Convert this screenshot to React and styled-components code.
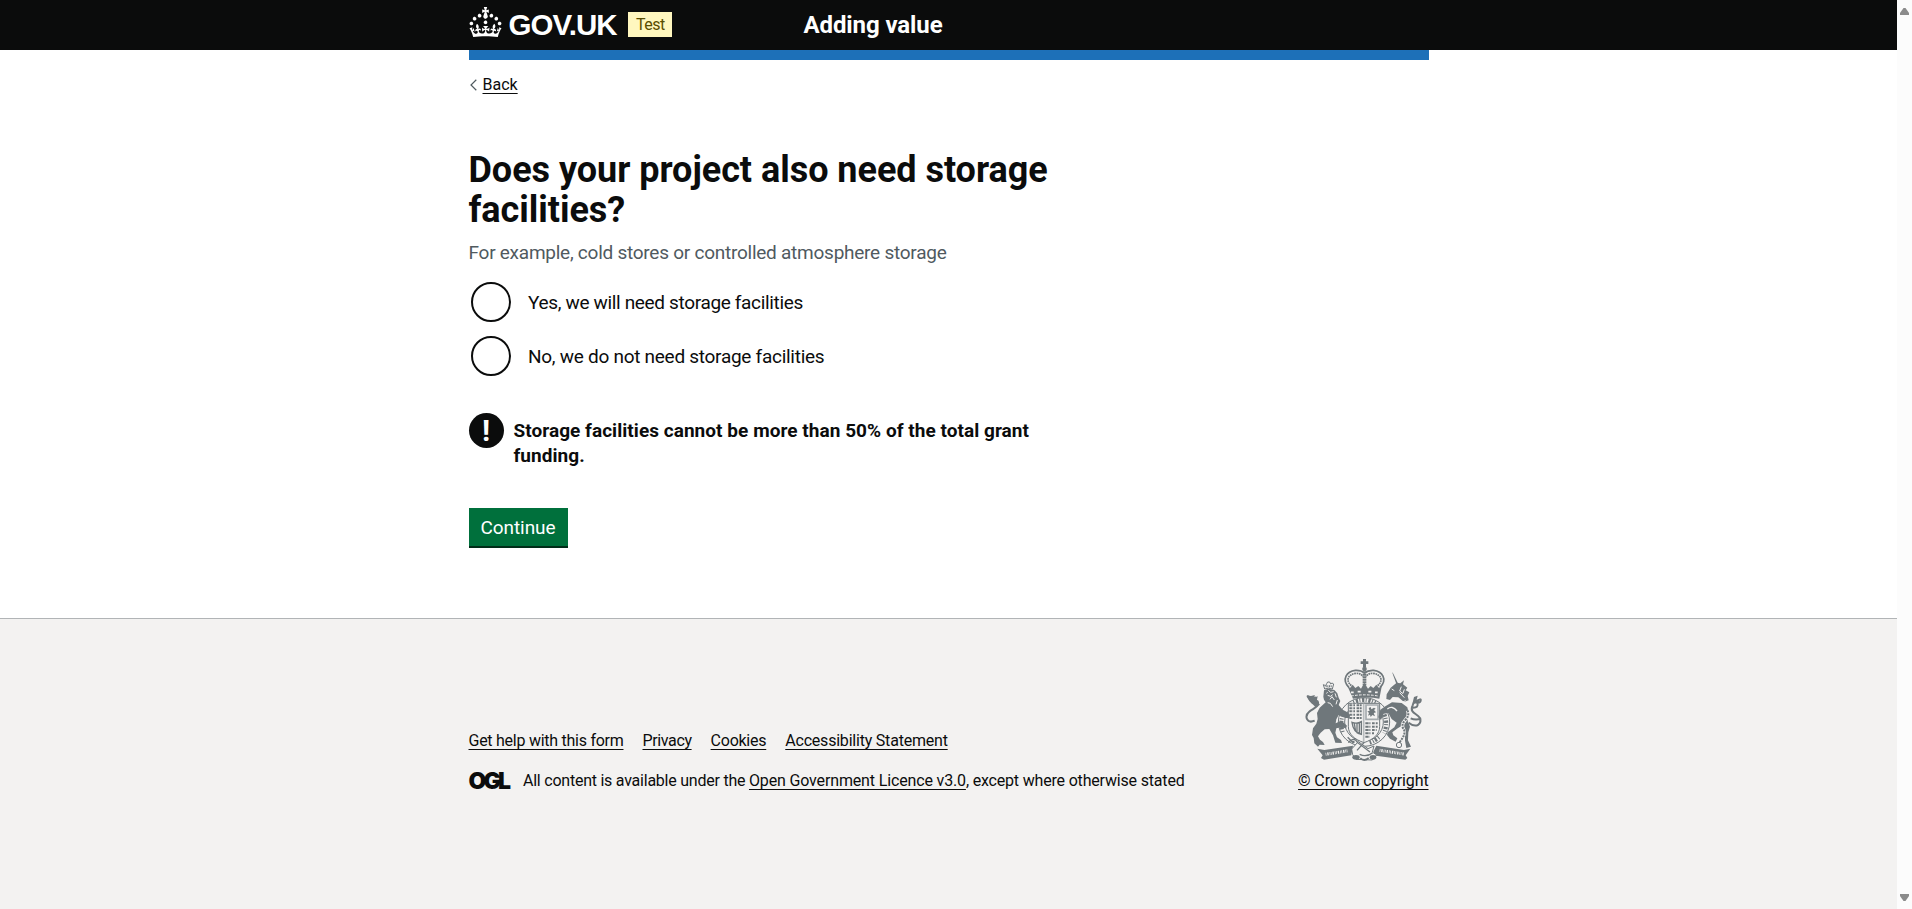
import React from "react";
import styled, { createGlobalStyle } from "styled-components";

const GlobalStyle = createGlobalStyle`
  *, *::before, *::after { box-sizing: border-box; }
  html, body { margin: 0; padding: 0; height: 100%; overflow: hidden; background: #fff; }
  body { font-family: Roboto, "Liberation Sans", Arial, sans-serif; color: #0b0c0c; }
  #root { height: 100%; }
`;

const Window = styled.div`
  display: flex;
  height: 909px;
`;
const Page = styled.div`
  display: flex;
  flex-direction: column;
  flex: 1;
  min-width: 0;
`;
const Scrollbar = styled.div`
  display: flex;
  flex-direction: column;
  justify-content: space-between;
  align-items: center;
  width: 15px;
  padding: 8px 0;
  background: #fcfcfc;
`;
const Arrow = styled.svg`
  display: block;
  width: 9px;
  height: 7px;
  fill: #8b8b8b;
  transform: ${(p) => (p.$down ? "rotate(180deg)" : "none")};
`;
const Container = styled.div`
  width: 960px;
  margin: 0 auto;
`;

const Header = styled.header`
  height: 50px;
  background: #0b0c0c;
  color: #fff;
`;
const HeaderRow = styled(Container)`
  display: flex;
  align-items: center;
  height: 50px;
`;
const Brand = styled.div`
  display: flex;
  align-items: center;
  width: 335px;
`;
const Crown = styled.svg`
  display: block;
  width: 33px;
  height: 30px;
  margin-top: -6px;
  fill: #fff;
`;
const Wordmark = styled.span`
  width: 119.5px;
  margin-left: 7px;
  font: 700 29.5px/30px "Liberation Sans", Arial, sans-serif;
  letter-spacing: -0.9px;
  white-space: nowrap;
`;
const PhaseTag = styled.strong`
  width: 44px;
  height: 25px;
  margin-top: -1px;
  padding-left: 8px;
  background: #fff7bf;
  color: #594d00;
  font-size: 16px;
  font-weight: 400;
  line-height: 25px;
  letter-spacing: -0.5px;
`;
const ServiceName = styled.span`
  font-size: 24px;
  font-weight: 700;
  line-height: 30px;
  letter-spacing: -0.1px;
`;
const BlueBar = styled(Container)`
  height: 10px;
  background: #1d70b8;
`;

const Link = styled.a`
  color: #0b0c0c;
  text-decoration: underline;
  text-decoration-thickness: 1px;
  text-underline-offset: 2.6px;
  text-decoration-skip-ink: none;
  letter-spacing: ${(p) => p.$track || 0}px;
  white-space: nowrap;
`;
const BackRow = styled.div`
  display: flex;
  align-items: center;
  gap: 5.5px;
  height: 20px;
  margin-top: 15px;
  padding-left: 1.5px;
  font-size: 16px;
  line-height: 20px;
`;
const Chevron = styled.svg`
  display: block;
  width: 7px;
  height: 12px;
  fill: none;
  stroke: #505a5f;
  stroke-width: 1.2;
`;

const Main = styled.main`
  width: 630px;
  padding-top: 55px;
`;
const Heading = styled.h1`
  margin: 0;
  font-size: 36px;
  font-weight: 700;
  line-height: 40px;
  letter-spacing: -0.03px;
`;
const Hint = styled.p`
  margin: 10px 0 0;
  color: #505a5f;
  font-size: 19px;
  line-height: 25px;
  letter-spacing: -0.25px;
`;
const Radios = styled.div`
  display: flex;
  flex-direction: column;
  gap: 14px;
  margin-top: 17px;
`;
const Option = styled.label`
  display: flex;
  align-items: center;
  gap: 17.5px;
  height: 40px;
  padding-left: 2px;
  font-size: 19px;
  line-height: 25px;
  letter-spacing: ${(p) => p.$track}px;
`;
const Circle = styled.span`
  width: 40px;
  height: 40px;
  border: 2px solid #0b0c0c;
  border-radius: 50%;
`;
const Warning = styled.div`
  display: flex;
  align-items: flex-start;
  gap: 10px;
  margin-top: 37px;
`;
const WarningIcon = styled.span`
  flex: none;
  width: 35px;
  height: 35px;
  border-radius: 50%;
  background: #0b0c0c;
  color: #fff;
  font-size: 30px;
  font-weight: 700;
  line-height: 35px;
  text-align: center;
`;
const WarningText = styled.strong`
  width: 545px;
  padding-top: 5px;
  font-size: 19px;
  font-weight: 700;
  line-height: 25px;
  letter-spacing: 0.045px;
`;
const Button = styled.button`
  display: block;
  width: 99px;
  height: 38px;
  margin: 40px 0 0;
  padding: 1px 0 0;
  border: 0;
  background: #00703c;
  box-shadow: 0 2px 0 #002d18;
  color: #fff;
  font: 400 19px/19px Roboto, "Liberation Sans", Arial, sans-serif;
  letter-spacing: -0.08px;
`;

const Footer = styled.footer`
  flex: 1;
  margin-top: 72px;
  padding-top: 39px;
  border-top: 1px solid #b1b4b6;
  background: #f3f2f1;
  font-size: 16px;
  line-height: 20px;
`;
const FooterRow = styled(Container)`
  display: flex;
  justify-content: space-between;
  align-items: flex-end;
`;
const FooterLinks = styled.div`
  display: flex;
  gap: 19px;
  margin-bottom: 20px;
`;
const Licence = styled.div`
  display: flex;
  align-items: center;
  white-space: nowrap;
`;
const OglMark = styled.span`
  width: 54.5px;
  margin-top: -1px;
  font: 900 23px/20px Inter, "Liberation Sans", sans-serif;
  letter-spacing: -2.9px;
`;
const Tracked = styled.span`
  letter-spacing: ${(p) => p.$track}px;
`;
const Crest = styled.div`
  display: flex;
  flex-direction: column;
  align-items: flex-end;
`;
const Arms = styled.svg`
  display: block;
  width: 120px;
  height: 104px;
  margin: 0 5px 9px 0;
`;

const G = "#6f777b";
const BG = "#f3f2f1";

function RoyalArms() {
  return (
    <Arms viewBox="72 54 360 312" fill={G} stroke="none">
      {/* crown */}
      <path d="M249 57h9v7h7v8h-7v9h-9v-9h-7v-8h7z" />
      <circle cx="253.500" cy="87" r="7" />
      <g fill="none" stroke={G}>
        <path d="M207 143C183 117 201 94 226 91Q243 90 253 99Q264 90 281 91C306 94 324 117 300 143" strokeWidth="5" />
        <path d="M214 137C194 119 207 102 228 100Q242 99 249 110M293 137C313 119 300 102 279 100Q265 99 258 110" strokeWidth="5" strokeDasharray="5 2" />
        <path d="M253.500 94V136" strokeWidth="11" strokeDasharray="6 1.500" />
      </g>
      <path d="M201 135l9 9 8-10 8 10 9-6 8 8 10-18 11 18 8-8 8 6 9-10 8 10 9-9-8 41q-35-7-79 0z" />
      <path d="M213 157h8M233 155h9M265 155h9M285 157h8" stroke={BG} strokeWidth="5" />
      <path d="M213 168q41-7 81 0" fill="none" stroke={BG} strokeWidth="3" strokeDasharray="8 4" />
      {/* garter and shield */}
      <ellipse cx="252" cy="246" rx="77" ry="73" fill={BG} stroke={G} strokeWidth="3" />
      <ellipse cx="252" cy="246" rx="58" ry="57" fill="none" stroke={G} strokeWidth="3" />
      <path d="M188 276Q178 242 193 213M220 187q34-15 66 2M310 216q16 30 2 64M297 292q-15 12-28 16" fill="none" stroke={G} strokeWidth="12" strokeDasharray="3 5 7 4" />
      <path d="M205 190h94v69c0 24-18 39-47 49-29-10-47-25-47-49z" fill={BG} stroke={G} strokeWidth="3" />
      <g stroke={G} strokeWidth="6" strokeDasharray="10 2 5 3" fill="none">
        <path d="M208 196h39M208 205h39M208 214h39M208 224h39M208 234h39" />
        <path d="M256 250h39M256 260h38M256 270h34M256 280h26M256 290h13" />
      </g>
      <path d="M217 190v50M229 190v50M272 244v50M285 244v42" stroke={BG} strokeWidth="2" />
      <path d="M251 191v116" stroke="#b7bbbd" strokeWidth="5" />
      <path d="M258 195h36v43h-36z" fill="none" stroke="#a5abae" strokeWidth="5" />
      <path d="M266 204l6-3 2 7 8-5 5 3-5 4 6 7-7 2 4 10-8-4-5 6-2-7-6 3 3-8-5-5 7-1z" />
      <path d="M216 247q15 6 28-2v38q-24-5-28-36zM223 251l4 24M231 251v29M238 250v31" fill="none" stroke={G} strokeWidth="4" />
      {/* lion */}
      <path d="M134 147l-4-13 7 3 3-6 3-5h6l3 6 4-3 5 3-4 15q-12-5-23 0z" fill="none" stroke={G} strokeWidth="3" />
      <path d="M137 139h20" stroke={G} strokeWidth="6" strokeDasharray="3 2" />
      <path d="M132 151l13-5 18 4 9 10 4 13 5 10-5 12 12 14 13 7 9 9-1 9-13 0-20-9-7 13-2 12 10-5 14 3 10 9-3 8-14-3-15 3-3 13 5 14 12 8 3 9-20-1-7-22-11-19-14 1-12 10-8 11 6 10 9 7 5 9-15-1-5 6-11-10-2-16-5-9 3-20 10-14 4-14-2-18 8-16 18-16-5-8-2-9z" />
      <path d="M145 151l7 6 9-2M139 160l4-3M143 166l9 3 6-5M150 178l6-8 7 10M165 160l4 12M143 188l8 2 7 10M172 180l-4 13" fill="none" stroke={BG} strokeWidth="3" />
      <path d="M104 242C81 252 71 229 89 214C105 203 119 199 113 184L102 177M114 188Q100 195 91 182L82 168Q101 181 107 170" fill="none" stroke={G} strokeWidth="6" />
      <path d="M80 166l13 2 12-3-5 9 13-5-3 15 10 10-13 8-12-12-8-10z" />
      {/* unicorn */}
      <path d="M336 96l4 5 16 33-5 3z" />
      <path d="M350 128l11 2 11-9-3 12 13 10-5 8 11 6-5 11 3 13-14 5-17-14-17-1-8 9-11-3 1-14 12-20z" />
      <path d="M327 181l28 11 22-10M335 147l8 5M364 140l-5 13 10 8M373 148l-4 12M359 158l14 15" fill="none" stroke={BG} strokeWidth="3" />
      <path d="M316 199l20-12 29 2 17 13 4 18-3 23 7 17-5 17-1 24 9 19-14 4-4-22 0-22-11-22-13 8-14 11 3 9 12 9-5 10-17-9-9-11 2-8 20-15 7-14-15-11-10-18-14 2-8 19-8-8 6-23z" />
      <path d="M322 207q15-12 29 6" fill="none" stroke={BG} strokeWidth="4" />
      <path d="M386 248C410 267 427 251 419 233C411 220 387 219 398 196Q402 181 414 188M392 235Q406 241 424 236M399 203Q417 203 412 189Q424 188 422 177" fill="none" stroke={G} strokeWidth="6" />
      <path d="M397 191l5-20 11-4-3 12 13-5-8 16z" />
      <path d="M382 211Q390 225 376 240T371 268T357 309" fill="none" stroke={BG} strokeWidth="10" />
      <path d="M382 211Q390 225 376 240T371 268T357 309" fill="none" stroke={G} strokeWidth="6" strokeDasharray="6 3" />
      <circle cx="357" cy="315" r="8" fill={BG} stroke={G} strokeWidth="3" />
      {/* ribbon */}
      <path d="M112 326l21 4 86-13-5 29-82 13-9-5 5-8z" />
      <path d="M391 326l-19 4-83-13-9 18 8 12 88 12 6-5-5-8z" />
      <path d="M137 343l68-11M299 331l74 11" stroke={BG} strokeWidth="9" strokeDasharray="2 3 4 3 2 2" />
      <path d="M215 327l20-22 29 21 18-8-5 18 13 9-13 15-49-2-10-14z" fill={BG} stroke={G} strokeWidth="3" />
      <path d="M203 292l15 15M205 308q17-20 28 0l37 28M231 331l21-23M239 343q20 10 39-5" fill="none" stroke={G} strokeWidth="4" />
      <circle cx="220" cy="306" r="4" />
      <ellipse cx="228" cy="352" rx="11" ry="7" />
      <ellipse cx="279" cy="352" rx="10" ry="7" />
      <path d="M241 354q11 12 25 0" fill="none" stroke={G} strokeWidth="5" />
    </Arms>
  );
}

function CrownLogo() {
  return (
    <Crown viewBox="0 0 32 30" role="img" aria-label="Crown">
      <path d="M22.6 10.4c-1 .4-2-.1-2.4-1-.4-.9.1-2 1-2.4.9-.4 2 .1 2.4 1s-.1 2-1 2.4m-5.900 6.700c-.9.4-2-.1-2.400-1-.4-.9.1-2 1-2.400.9-.4 2 .1 2.400 1s-.1 2-1 2.400m10.800-3.700c-1 .4-2-.1-2.400-1-.4-.9.1-2 1-2.400.9-.4 2 .1 2.400 1s0 2-1 2.400m3.300 4.800c-1 .4-2-.1-2.400-1-.4-.9.1-2 1-2.400.9-.4 2 .1 2.400 1s-.1 2-1 2.400M17 4.700l2.300 1.200V2.500l-2.300.7-.2-.2.9-3h-3.400l.9 3-.2.2c-.1.1-2.300-.7-2.300-.7v3.400L15 4.700c.1.1.1.2.2.2l-1.300 4c-.1.2-.1.4-.1.6 0 1.100.8 2 1.900 2.200h.7c1-.2 1.900-1.100 1.900-2.100 0-.2 0-.4-.1-.6l-1.300-4c-.1-.2 0-.2.1-.3m-7.600 5.700c.9.4 2-.1 2.400-1 .4-.9-.1-2-1-2.400-.9-.4-2 .1-2.400 1s0 2 1 2.400m-5 3c.9.4 2-.1 2.400-1 .4-.9-.1-2-1-2.400-.9-.4-2 .1-2.400 1s.1 2 1 2.400m-3.200 4.800c.9.4 2-.1 2.400-1 .4-.9-.1-2-1-2.400-.9-.4-2 .1-2.400 1s0 2 1 2.400m14.800 11c4.400 0 8.600.3 12.300.8 1.100-4.500 2.400-7 3.700-8.800l-2.500-.9c.2 1.300.3 1.900 0 2.700-.4-.4-.8-1.100-1.100-2.300l-1.200 4c.7-.5 1.300-.8 2-.9-1.100 2.500-2.600 3.100-3.500 3-1.100-.2-1.700-1.200-1.500-2.100.3-1.200 1.500-1.500 2.100-.1 1.100-2.300-.8-3-2-2.300 1.900-1.900 2.100-3.500.6-5.600-2.100 1.600-2.100 3.200-1.200 5.500-1.200-1.400-3.200-.6-2.500 1.600.9-1.400 2.100-.5 1.900.8-.2 1.100-1.700 2.100-3.500 1.900-2.700-.2-2.900-2.100-2.900-3.600.7-.1 1.900.5 2.900 1.900l.4-4.300c-1.100 1.100-2.100 1.400-3.200 1.400.4-1.200 2.100-3 2.100-3h-5.400s1.700 1.900 2.100 3c-1.100 0-2.100-.2-3.200-1.400l.4 4.300c1-1.400 2.200-2 2.900-1.900-.1 1.500-.2 3.400-2.900 3.600-1.900.2-3.400-.8-3.500-1.900-.2-1.300 1-2.200 1.900-.8.7-2.300-1.200-3-2.500-1.600.9-2.200.9-3.900-1.200-5.500-1.500 2-1.300 3.700.6 5.600-1.200-.7-3.100 0-2 2.300.6-1.400 1.800-1.100 2.100.1.2.9-.3 1.900-1.500 2.100-.9.2-2.400-.5-3.500-3 .6 0 1.200.3 2 .9l-1.200-4c-.3 1.100-.7 1.900-1.100 2.300-.3-.8-.2-1.400 0-2.700l-2.900.9C1.300 23 2.600 25.500 3.700 30c3.700-.5 7.900-.8 12.300-.8" />
    </Crown>
  );
}

export default function App() {
  return (
    <>
      <GlobalStyle />
      <Window>
        <Page>
          <Header>
            <HeaderRow>
              <Brand>
                <CrownLogo />
                <Wordmark>GOV.UK</Wordmark>
                <PhaseTag>Test</PhaseTag>
              </Brand>
              <ServiceName>Adding value</ServiceName>
            </HeaderRow>
          </Header>
          <BlueBar />
          <Container>
            <BackRow>
              <Chevron viewBox="0 0 7 12">
                <path d="M6.300 .8L1 6L6.300 11.200" />
              </Chevron>
              <Link>Back</Link>
            </BackRow>
            <Main>
              <Heading>Does your project also need storage facilities?</Heading>
              <Hint>For example, cold stores or controlled atmosphere storage</Hint>
              <Radios>
                <Option $track={-0.34}>
                  <Circle />
                  Yes, we will need storage facilities
                </Option>
                <Option $track={-0.275}>
                  <Circle />
                  No, we do not need storage facilities
                </Option>
              </Radios>
              <Warning>
                <WarningIcon>!</WarningIcon>
                <WarningText>Storage facilities cannot be more than 50% of the total grant funding.</WarningText>
              </Warning>
              <Button>Continue</Button>
            </Main>
          </Container>
          <Footer>
            <FooterRow>
              <div>
                <FooterLinks>
                  <Link $track={-0.26}>Get help with this form</Link>
                  <Link $track={-0.37}>Privacy</Link>
                  <Link $track={-0.25}>Cookies</Link>
                  <Link $track={-0.21}>Accessibility Statement</Link>
                </FooterLinks>
                <Licence>
                  <OglMark>OGL</OglMark>
                  <div>
                    <Tracked $track={-0.235}>All content is available under the </Tracked>
                    <Link $track={-0.15}>Open Government Licence v3.0</Link>
                    <Tracked $track={-0.18}>, except where otherwise stated</Tracked>
                  </div>
                </Licence>
              </div>
              <Crest>
                <RoyalArms />
                <Link $track={-0.12}>© Crown copyright</Link>
              </Crest>
            </FooterRow>
          </Footer>
        </Page>
        <Scrollbar>
          <Arrow viewBox="0 0 9 7">
            <path d="M3.500 0h2L9 5v2H0V5z" />
          </Arrow>
          <Arrow viewBox="0 0 9 7" $down>
            <path d="M3.500 0h2L9 5v2H0V5z" />
          </Arrow>
        </Scrollbar>
      </Window>
    </>
  );
}
